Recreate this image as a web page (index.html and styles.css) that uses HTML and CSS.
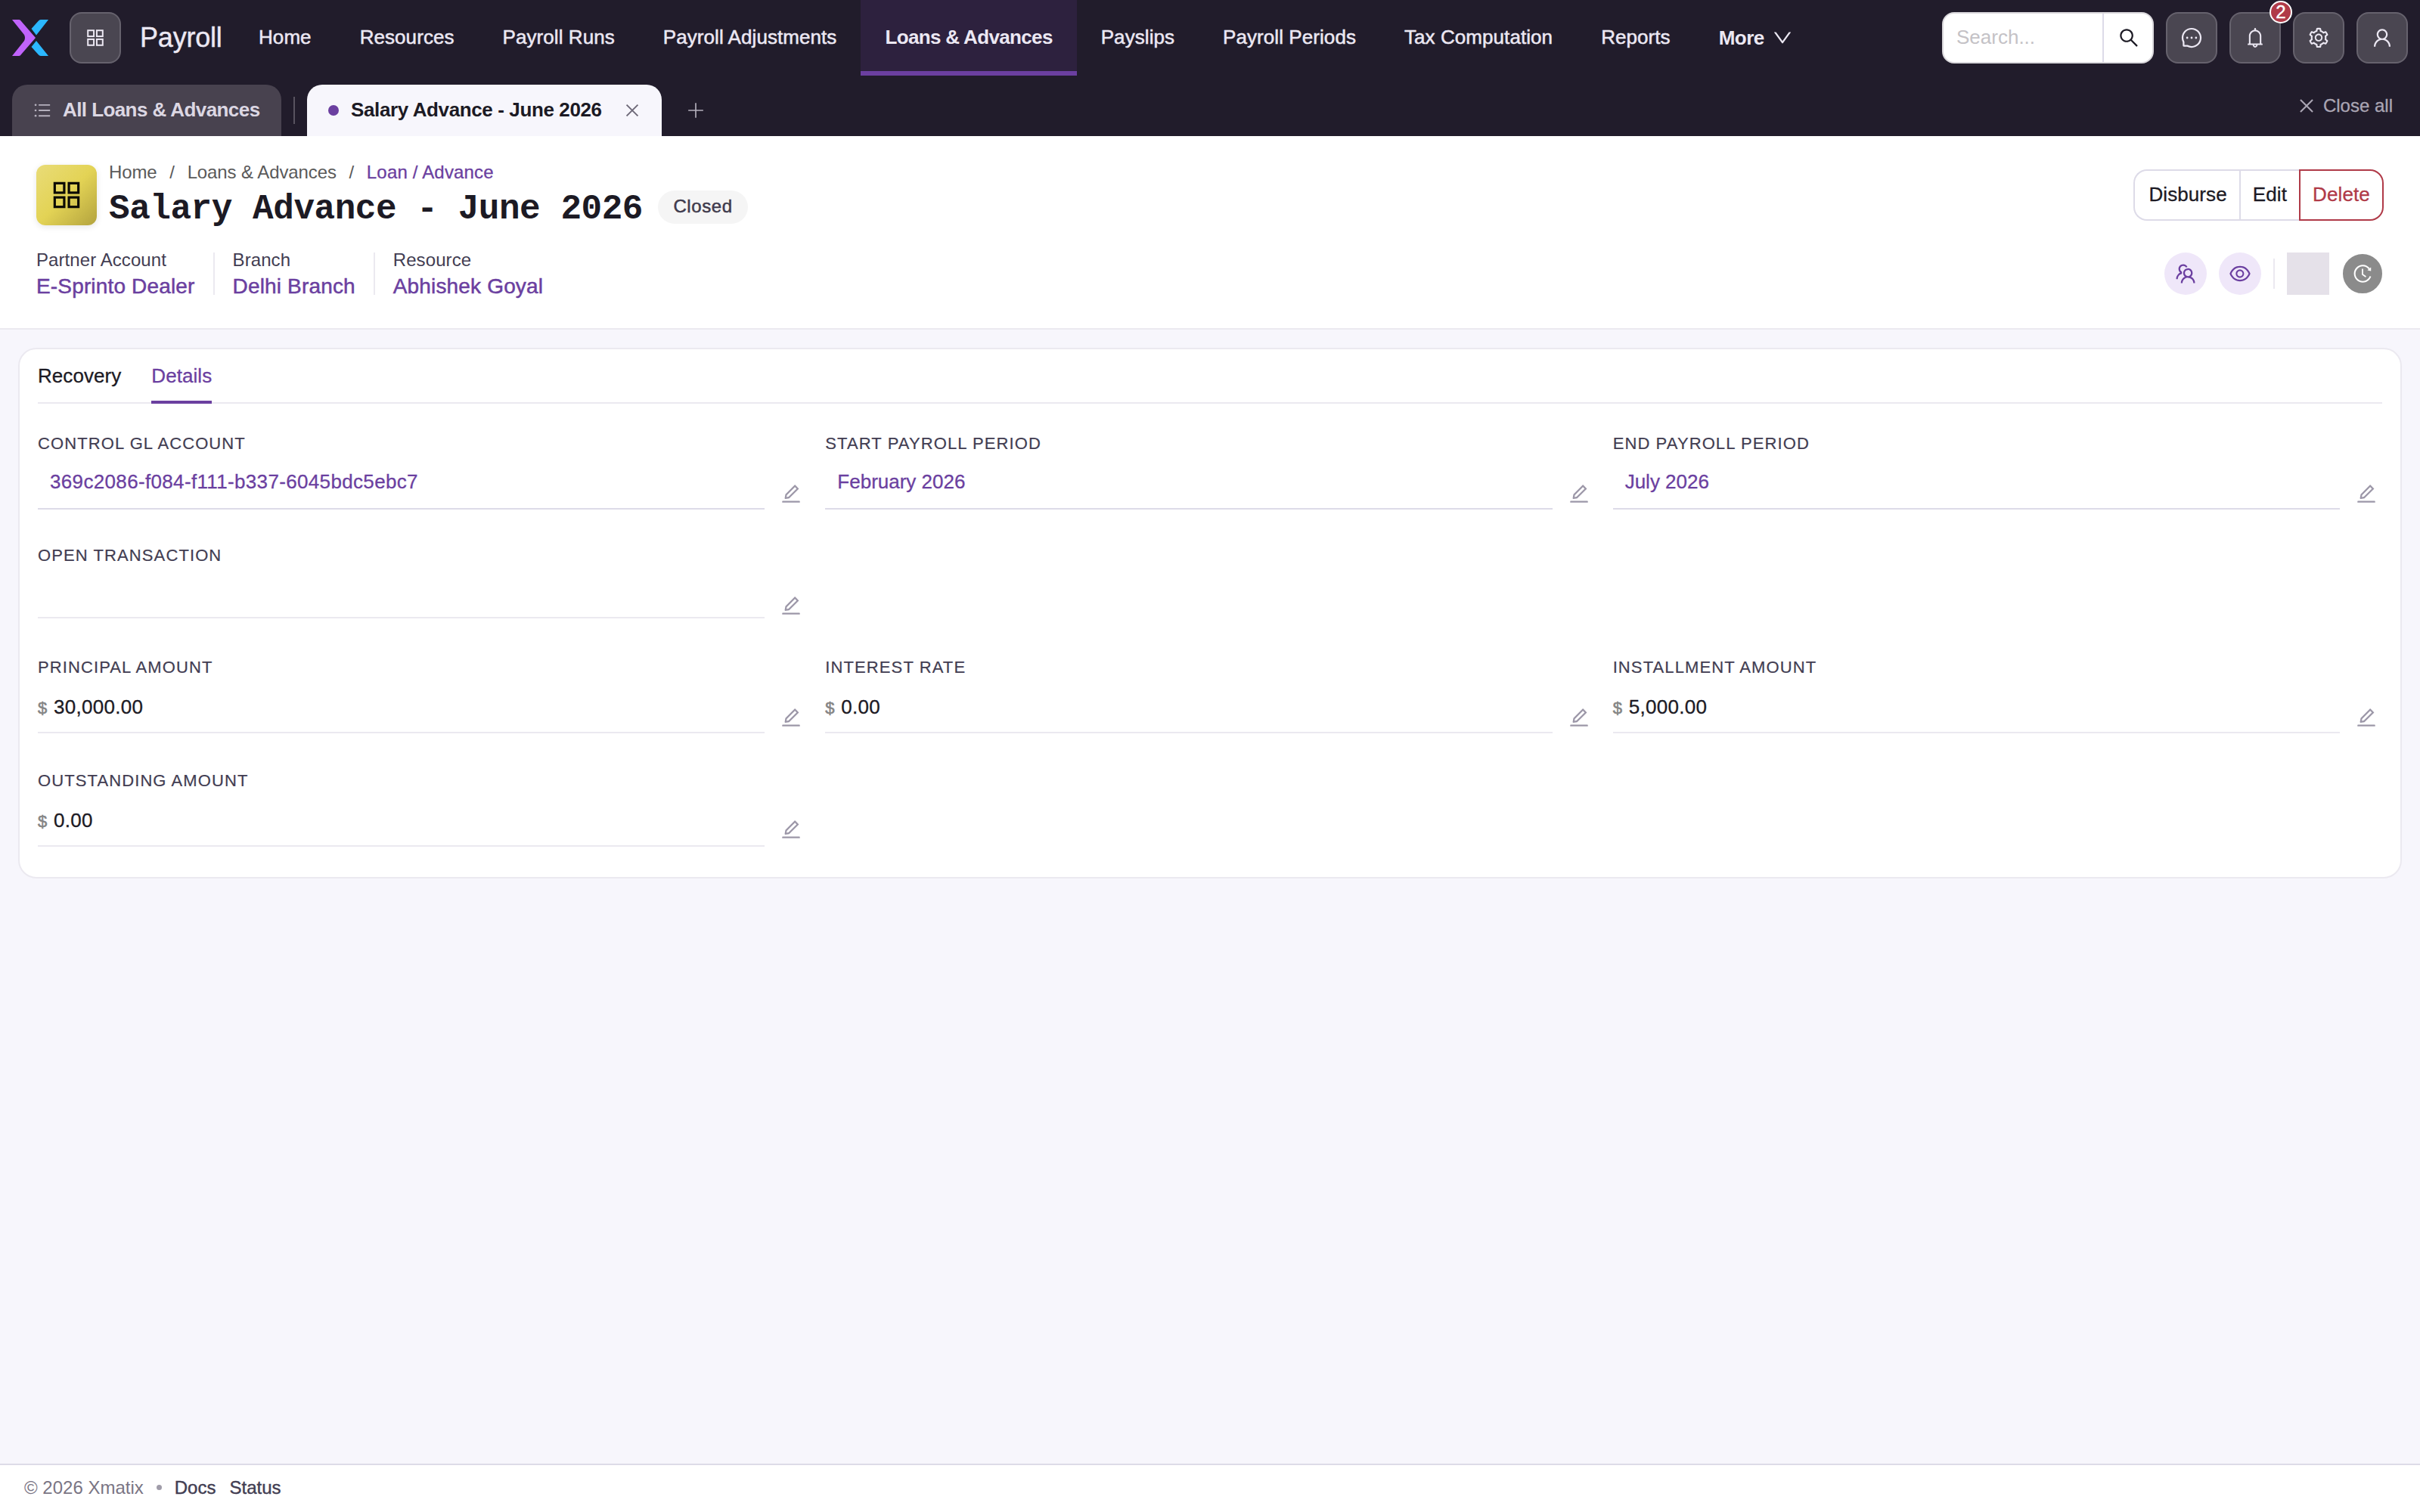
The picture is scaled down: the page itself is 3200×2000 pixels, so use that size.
FILE: index.html
```html
<!DOCTYPE html>
<html lang="en">
<head>
  <title>Salary Advance - June 2026</title>
  <meta charset="UTF-8">
  <meta name="viewport" content="width=device-width, initial-scale=1.0">
  <link rel="stylesheet" href="styles.css">
</head>
<body>
  <!-- Icon set -->
  <svg class="sprite" xmlns="http://www.w3.org/2000/svg">
    <symbol id="i-apps" viewBox="0 0 1024 1024">
      <g fill="none" stroke="currentColor" stroke-width="68">
        <rect x="178" y="178" width="268" height="268"/><rect x="578" y="178" width="268" height="268"/>
        <rect x="178" y="578" width="268" height="268"/><rect x="578" y="578" width="268" height="268"/>
      </g>
    </symbol>
    <symbol id="i-list" viewBox="0 0 1024 1024">
      <path d="M320 192h592v72H320zM320 476h592v72H320zM320 760h592v72H320z"/>
      <circle cx="160" cy="228" r="54"/><circle cx="160" cy="512" r="54"/><circle cx="160" cy="796" r="54"/>
    </symbol>
    <symbol id="i-close" viewBox="0 0 1024 1024">
      <path d="M195 195L829 829M829 195L195 829" fill="none" stroke="currentColor" stroke-width="82"/>
    </symbol>
    <symbol id="i-plus" viewBox="0 0 1024 1024">
      <path d="M482 152h60v720h-60zM152 482h720v60H152z"/>
    </symbol>
    <symbol id="i-down" viewBox="0 0 1024 1024">
      <path d="M884 256h-75c-5.1 0-9.9 2.5-12.9 6.6L512 654.2 227.9 262.6c-3-4.1-7.8-6.6-12.9-6.6h-75c-6.5 0-10.3 7.4-6.5 12.7l352.6 486.1c12.8 17.6 39 17.6 51.7 0l352.6-486.1c3.9-5.3.1-12.7-6.4-12.7z"/>
    </symbol>
    <symbol id="i-search" viewBox="0 0 1024 1024">
      <path d="M909.6 854.5L649.9 594.8C690.2 542.7 712 479 712 412c0-80.2-31.3-155.4-87.9-212.1-56.6-56.7-132-87.9-212.1-87.9s-155.5 31.3-212.1 87.9C143.2 256.5 112 331.8 112 412c0 80.1 31.3 155.5 87.9 212.1C256.5 680.8 331.8 712 412 712c67 0 130.6-21.8 182.7-62l259.7 259.6a8.2 8.2 0 0011.6 0l43.6-43.5a8.2 8.2 0 000-11.6zM570.4 570.4C528 612.7 471.8 636 412 636s-116-23.3-158.4-65.6C211.3 528 188 471.8 188 412s23.3-116.1 65.6-158.4C296 211.3 352.2 188 412 188s116.1 23.2 158.4 65.6S636 352.2 636 412s-23.3 116.1-65.6 158.4z"/>
    </symbol>
    <symbol id="i-message" viewBox="0 0 1024 1024">
      <path d="M464 512a48 48 0 1096 0 48 48 0 10-96 0zm200 0a48 48 0 1096 0 48 48 0 10-96 0zm-400 0a48 48 0 1096 0 48 48 0 10-96 0zm661.2-173.6c-22.6-53.7-55-101.9-96.3-143.3a444.35 444.35 0 00-143.3-96.3C630.6 75.7 572.2 64 512 64h-2c-60.6.3-119.3 12.3-174.5 35.9a445.35 445.35 0 00-142 96.5c-40.9 41.3-73 89.3-95.2 142.8-23 55.4-34.6 114.3-34.3 174.9A449.4 449.4 0 00112 714v152a46 46 0 0046 46h152.1A449.4 449.4 0 00510 960h2.1c59.9 0 118-11.6 172.7-34.3a444.48 444.48 0 00142.8-95.2c41.3-40.9 73.8-88.7 96.5-142 23.6-55.2 35.6-113.9 35.9-174.5.3-60.9-11.5-120-34.8-175.6zm-151.1 438C704 845.8 611 884 512 884h-1.7c-60.3-.3-120.2-15.3-173.1-43.5l-8.4-4.5H188V695.2l-4.5-8.4C155.3 633.9 140.3 574 140 513.7c-.4-99.7 37.7-193.3 107.6-263.8 69.8-70.5 163.1-109.5 262.8-109.9h1.7c50 0 98.5 9.7 144.2 28.9 44.6 18.7 84.6 45.6 119 80 34.3 34.3 61.3 74.4 80 119 19.4 46.2 29.1 95.2 28.9 145.8-.6 99.6-39.7 192.9-110.1 262.7z"/>
    </symbol>
    <symbol id="i-bell" viewBox="0 0 1024 1024">
      <path d="M816 768h-24V428c0-141.1-104.3-257.7-240-277.1V112c0-22.1-17.9-40-40-40s-40 17.9-40 40v38.9c-135.7 19.4-240 136-240 277.1v340h-24c-17.7 0-32 14.3-32 32v32c0 4.4 3.6 8 8 8h216c0 61.8 50.2 112 112 112s112-50.2 112-112h216c4.4 0 8-3.6 8-8v-32c0-17.7-14.3-32-32-32zM512 888c-26.5 0-48-21.5-48-48h96c0 26.5-21.5 48-48 48zM304 768V428c0-55.6 21.6-107.8 60.9-147.1S456.4 220 512 220c55.6 0 107.8 21.6 147.1 60.9S720 372.4 720 428v340H304z"/>
    </symbol>
    <symbol id="i-setting" viewBox="0 0 1024 1024">
      <path d="M924.8 625.7l-65.5-56c3.1-19 4.7-38.4 4.7-57.8s-1.6-38.8-4.7-57.8l65.5-56a32.03 32.03 0 009.3-35.2l-.9-2.6a443.74 443.74 0 00-79.7-137.9l-1.8-2.1a32.12 32.12 0 00-35.1-9.5l-81.3 28.9c-30-24.6-63.5-44-99.7-57.6l-15.7-85a32.05 32.05 0 00-25.8-25.7l-2.7-.5c-52.1-9.4-106.9-9.4-159 0l-2.7.5a32.05 32.05 0 00-25.8 25.7l-15.8 85.4a351.86 351.86 0 00-99 57.4l-81.9-29.1a32 32 0 00-35.1 9.5l-1.8 2.1a446.02 446.02 0 00-79.7 137.9l-.9 2.6c-4.5 12.5-.8 26.5 9.3 35.2l66.3 56.6c-3.1 18.8-4.6 38-4.6 57.1 0 19.2 1.5 38.4 4.6 57.1L99 625.5a32.03 32.03 0 00-9.3 35.2l.9 2.6c18.1 50.4 44.9 96.9 79.7 137.9l1.8 2.1a32.12 32.12 0 0035.1 9.5l81.9-29.1c29.8 24.5 63.1 43.9 99 57.4l15.8 85.4a32.05 32.05 0 0025.8 25.7l2.7.5a449.4 449.4 0 00159 0l2.7-.5a32.05 32.05 0 0025.8-25.7l15.7-85a350 350 0 0099.7-57.6l81.3 28.9a32 32 0 0035.1-9.5l1.8-2.1c34.8-41.1 61.6-87.5 79.7-137.9l.9-2.6c4.5-12.3.8-26.3-9.3-35zM788.3 465.9c2.5 15.1 3.8 30.6 3.8 46.1s-1.3 31-3.8 46.1l-6.6 40.1 74.7 63.9a370.03 370.03 0 01-42.6 73.6L721 702.8l-31.4 25.8c-23.9 19.6-50.5 35-79.3 45.8l-38.1 14.3-17.9 97a377.5 377.5 0 01-85 0l-17.9-97.2-37.8-14.5c-28.5-10.8-55-26.2-78.7-45.7l-31.4-25.9-93.4 33.2c-17-22.9-31.2-47.6-42.6-73.6l75.5-64.5-6.5-40c-2.4-14.9-3.7-30.3-3.7-45.5 0-15.3 1.2-30.6 3.7-45.5l6.5-40-75.5-64.5c11.3-26.1 25.6-50.7 42.6-73.6l93.4 33.2 31.4-25.9c23.7-19.5 50.2-34.9 78.7-45.7l37.9-14.3 17.9-97.2c28.1-3.2 56.8-3.2 85 0l17.9 97 38.1 14.3c28.7 10.8 55.4 26.2 79.3 45.8l31.4 25.8 92.8-32.9c17 22.9 31.2 47.6 42.6 73.6L781.8 426l6.5 39.9zM512 326c-97.2 0-176 78.8-176 176s78.8 176 176 176 176-78.8 176-176-78.8-176-176-176zm79.2 255.2A111.6 111.6 0 01512 614c-29.9 0-58-11.7-79.2-32.8A111.6 111.6 0 01400 502c0-29.9 11.7-58 32.8-79.2C454 401.6 482.1 390 512 390c29.9 0 58 11.6 79.2 32.8A111.6 111.6 0 01624 502c0 29.9-11.7 58-32.8 79.2z"/>
    </symbol>
    <symbol id="i-user" viewBox="0 0 1024 1024">
      <path d="M858.5 763.6a374 374 0 00-80.6-119.5 375.63 375.63 0 00-119.5-80.6c-.4-.2-.8-.3-1.2-.5C719.5 518 760 444.7 760 362c0-137-111-248-248-248S264 225 264 362c0 82.7 40.5 156 102.8 201.1-.4.2-.8.3-1.2.5-44.8 18.9-85 46-119.5 80.6a375.63 375.63 0 00-80.6 119.5A371.7 371.7 0 00136 901.8a8 8 0 008 8.2h60c4.4 0 7.9-3.5 8-7.8 2-77.2 33-149.5 87.8-204.3 56.7-56.7 132-87.9 212.2-87.9s155.5 31.2 212.2 87.9C779 752.7 810 825 812 902.2c.1 4.4 3.6 7.8 8 7.8h60a8 8 0 008-8.2c-1-47.8-10.9-94.3-29.5-138.2zM512 534c-45.9 0-89.1-17.9-121.6-50.4S340 407.9 340 362c0-45.9 17.9-89.1 50.4-121.6S466.1 190 512 190s89.1 17.9 121.6 50.4S684 316.1 684 362c0 45.9-17.9 89.1-50.4 121.6S557.9 534 512 534z"/>
    </symbol>
    <symbol id="i-team" viewBox="0 0 1024 1024">
      <path d="M824.2 699.9a301.55 301.55 0 00-86.4-60.4C783.1 602.8 812 546.8 812 484c0-110.8-92.4-201.7-203.2-200-109.1 1.7-197 90.6-197 200 0 62.8 29 118.8 74.2 155.5a300.95 300.95 0 00-86.4 60.4C345 754.6 314 826.8 312 903.8a8 8 0 008 8.2h56c4.3 0 7.9-3.4 8-7.7 1.9-58 25.4-112.3 66.7-153.5A226.62 226.62 0 01612 684c60.9 0 118.2 23.7 161.3 66.8C814.6 792 838 846.3 840 904.3c.1 4.3 3.7 7.7 8 7.7h56a8 8 0 008-8.2c-2-77-33-149.2-87.8-203.9zM612 612c-34.2 0-66.4-13.3-90.5-37.5a126.86 126.86 0 01-37.5-91.8c.3-32.8 13.4-64.5 36.3-88 24-24.6 56.1-38.3 90.4-38.7 33.9-.3 66.8 12.9 91 36.6 24.8 24.3 38.4 56.8 38.4 91.4 0 34.2-13.3 66.3-37.5 90.5A127.3 127.3 0 01612 612zM361.5 510.4c-.9-8.7-1.4-17.5-1.4-26.4 0-15.9 1.5-31.4 4.3-46.5.7-3.6-1.2-7.3-4.5-8.8-13.6-6.1-26.1-14.5-36.9-25.1a127.54 127.54 0 01-38.7-95.4c.9-32.1 13.8-62.6 36.3-85.6 24.7-25.3 57.9-39.1 93.2-38.7 31.9.3 62.7 12.6 86 34.4 7.9 7.4 14.7 15.6 20.4 24.4 2 3.1 5.9 4.4 9.3 3.2 17.6-6.1 36.2-10.4 55.3-12.4 5.6-.6 8.8-6.6 6.3-11.6-32.5-64.3-98.9-108.7-175.7-109.9-110.9-1.7-203.3 89.2-203.3 199.9 0 62.8 28.9 118.8 74.2 155.5-31.8 14.7-61.1 35-86.5 60.4-54.8 54.7-85.8 126.9-87.8 204a8 8 0 008 8.2h56.1c4.3 0 7.9-3.4 8-7.7 1.9-58 25.4-112.3 66.7-153.5 29.4-29.4 65.4-49.8 104.7-59.7 3.9-1 6.5-4.7 6-8.7z"/>
    </symbol>
    <symbol id="i-eye" viewBox="0 0 1024 1024">
      <path d="M942.2 486.2C847.4 286.5 704.1 186 512 186c-192.2 0-335.4 100.5-430.2 300.3a60.3 60.3 0 000 51.5C176.6 737.5 319.9 838 512 838c192.2 0 335.4-100.5 430.2-300.3 7.7-16.2 7.7-35 0-51.5zM512 766c-161.3 0-279.4-81.8-362.7-254C232.6 339.8 350.7 258 512 258c161.3 0 279.4 81.8 362.7 254C791.5 684.2 673.4 766 512 766zm-4-430c-97.2 0-176 78.8-176 176s78.8 176 176 176 176-78.8 176-176-78.8-176-176-176zm0 288c-61.9 0-112-50.1-112-112s50.1-112 112-112 112 50.1 112 112-50.1 112-112 112z"/>
    </symbol>
    <symbol id="i-history" viewBox="0 0 1024 1024">
      <path d="M536.1 273H488c-4.4 0-8 3.6-8 8v275.3c0 2.6 1.2 5 3.3 6.5l165.3 120.7c3.6 2.6 8.6 1.9 11.2-1.7l28.6-39c2.7-3.7 1.9-8.7-1.7-11.2L544.1 528.5V281c0-4.4-3.6-8-8-8zm219.8 75.2l156.8 38.3c5 1.2 9.9-2.6 9.9-7.7l.8-161.5c0-6.7-7.7-10.5-12.9-6.3L752.9 334.1a8 8 0 003 14.1zm167.7 301.1l-56.7-19.5a8 8 0 00-10.1 4.8c-1.9 5.1-3.9 10.1-6 15.1-17.8 42.1-43.3 80-75.9 112.5a353 353 0 01-112.5 75.9 352.18 352.18 0 01-137.7 27.8c-47.8 0-94.1-9.3-137.7-27.8a353 353 0 01-112.5-75.9c-32.5-32.5-58-70.4-75.9-112.5A353.44 353.44 0 01171 512c0-47.8 9.3-94.2 27.8-137.8 17.8-42.1 43.3-80 75.9-112.5a353 353 0 01112.5-75.9C430.6 167.3 477 158 524.8 158s94.1 9.3 137.7 27.8A353 353 0 01775 261.7c10.2 10.3 19.8 21 28.6 32.3l59.8-46.8C784.7 146.6 662.2 81.9 524.6 82 285 82.1 92.6 276.7 95 516.4 97.4 751.9 288.9 942 524.8 942c185.5 0 343.5-117.6 403.7-282.3 1.5-4.2-.7-8.9-4.9-10.4z"/>
    </symbol>
    <symbol id="i-edit" viewBox="0 0 1024 1024">
      <path d="M257.7 752c2 0 4-.2 6-.5L431.9 722c2-.4 3.9-1.3 5.3-2.8l423.9-423.9a9.96 9.96 0 000-14.1L694.9 114.9c-1.9-1.9-4.4-2.9-7.1-2.9s-5.2 1-7.1 2.9L256.8 538.8c-1.5 1.5-2.4 3.3-2.8 5.3l-29.5 168.2a33.5 33.5 0 009.4 29.8c6.6 6.4 14.9 9.9 23.8 9.9zm67.4-174.4L687.8 215l73.3 73.3-362.7 362.6-88.9 15.7 15.6-89zM880 836H144c-17.7 0-32 14.3-32 32v36c0 4.4 3.6 8 8 8h784c4.4 0 8-3.6 8-8v-36c0-17.7-14.3-32-32-32z"/>
    </symbol>
  </svg>

  <header class="topbar">
    <div class="navbar">
      <svg class="logo" viewBox="0 0 48 48">
        <path fill="#2bb7ff" d="M38 0H48L32 20.500L25.500 12L34.500 2Q36 0 38 0Z"/>
        <path fill="#2bb7ff" d="M38 48H48L32 28L25.500 36L34.500 46Q36 48 38 48Z"/>
        <path fill="#c063fb" d="M0 0H9Q11 0 12 2L31 24L12 46Q11 48 9 48H0L16 28Q18 24 16 20Z"/>
      </svg>
      <button class="icon-btn app-btn"><svg class="icon"><use href="#i-apps"/></svg></button>
      <div class="app-name">Payroll</div>
      <nav class="nav">
        <a class="nav-link">Home</a>
        <a class="nav-link">Resources</a>
        <a class="nav-link">Payroll Runs</a>
        <a class="nav-link">Payroll Adjustments</a>
        <a class="nav-link active">Loans &amp; Advances</a>
        <a class="nav-link">Payslips</a>
        <a class="nav-link">Payroll Periods</a>
        <a class="nav-link">Tax Computation</a>
        <a class="nav-link">Reports</a>
        <a class="nav-link more">More <svg class="icon"><use href="#i-down"/></svg></a>
      </nav>
      <div class="nav-tools">
        <div class="search">
          <span class="search-input">Search...</span>
          <button class="search-btn"><svg class="icon"><use href="#i-search"/></svg></button>
        </div>
        <button class="icon-btn"><svg class="icon"><use href="#i-message"/></svg></button>
        <button class="icon-btn"><svg class="icon"><use href="#i-bell"/></svg><span class="badge">2</span></button>
        <button class="icon-btn"><svg class="icon"><use href="#i-setting"/></svg></button>
        <button class="icon-btn"><svg class="icon"><use href="#i-user"/></svg></button>
      </div>
    </div>
    <div class="doc-tabs">
      <div class="doc-tab list-tab"><svg class="icon"><use href="#i-list"/></svg><span>All Loans &amp; Advances</span></div>
      <div class="doc-divider"></div>
      <div class="doc-tab open-tab"><i class="dot"></i><span>Salary Advance - June 2026</span><svg class="icon"><use href="#i-close"/></svg></div>
      <svg class="icon add-tab"><use href="#i-plus"/></svg>
      <div class="close-all"><svg class="icon"><use href="#i-close"/></svg>Close all</div>
    </div>
  </header>

  <section class="record-header">
    <div class="record-top">
      <div class="record-icon"><svg class="icon"><use href="#i-apps"/></svg></div>
      <div class="record-title">
        <div class="breadcrumb"><a>Home</a><i>/</i><a>Loans &amp; Advances</a><i>/</i><a class="current">Loan / Advance</a></div>
        <div class="title-row">
          <h1>Salary Advance - June 2026</h1>
          <span class="status">Closed</span>
        </div>
      </div>
      <div class="btn-group">
        <button class="btn">Disburse</button>
        <button class="btn">Edit</button>
        <button class="btn danger">Delete</button>
      </div>
    </div>
    <div class="record-meta">
      <div class="meta"><label>Partner Account</label><a>E-Sprinto Dealer</a></div>
      <div class="meta"><label>Branch</label><a>Delhi Branch</a></div>
      <div class="meta"><label>Resource</label><a>Abhishek Goyal</a></div>
      <div class="meta-tools">
        <span class="round"><svg class="icon"><use href="#i-team"/></svg></span>
        <span class="round"><svg class="icon"><use href="#i-eye"/></svg></span>
        <span class="tool-divider"></span>
        <span class="avatar"></span>
        <span class="round history"><svg class="icon"><use href="#i-history"/></svg></span>
      </div>
    </div>
  </section>

  <main class="card">
    <div class="tabs">
      <a class="tab">Recovery</a>
      <a class="tab active">Details</a>
    </div>
    <div class="fields">
      <div class="field">
        <label>Control GL Account</label>
        <div class="value link guid">369c2086-f084-f111-b337-6045bdc5ebc7</div>
        <svg class="icon edit"><use href="#i-edit"/></svg>
      </div>
      <div class="field">
        <label>Start Payroll Period</label>
        <div class="value link">February 2026</div>
        <svg class="icon edit"><use href="#i-edit"/></svg>
      </div>
      <div class="field">
        <label>End Payroll Period</label>
        <div class="value link">July 2026</div>
        <svg class="icon edit"><use href="#i-edit"/></svg>
      </div>
      <div class="field full">
        <label>Open Transaction</label>
        <div class="value empty"></div>
        <svg class="icon edit"><use href="#i-edit"/></svg>
      </div>
      <div class="field">
        <label>Principal Amount</label>
        <div class="value money"><span>$</span>30,000.00</div>
        <svg class="icon edit"><use href="#i-edit"/></svg>
      </div>
      <div class="field">
        <label>Interest Rate</label>
        <div class="value money"><span>$</span>0.00</div>
        <svg class="icon edit"><use href="#i-edit"/></svg>
      </div>
      <div class="field">
        <label>Installment Amount</label>
        <div class="value money"><span>$</span>5,000.00</div>
        <svg class="icon edit"><use href="#i-edit"/></svg>
      </div>
      <div class="field last">
        <label>Outstanding Amount</label>
        <div class="value money"><span>$</span>0.00</div>
        <svg class="icon edit"><use href="#i-edit"/></svg>
      </div>
    </div>
  </main>

  <footer class="footer">
    <span class="copy">© 2026 Xmatix</span>
    <i class="sep"></i>
    <a>Docs</a>
    <a>Status</a>
  </footer>
</body>
</html>
```
FILE: styles.css
```css
:root {
  --dark: #211c2b;
  --primary: #6b3fa0;
  --text: #1c1a24;
  --muted: #423d52;
  --border: #dddbe8;
  --border-light: #ebe9f0;
  --bg: #f7f6fc;
  --danger: #b03a48;
}

* {
  margin: 0;
  padding: 0;
  box-sizing: border-box;
}

body {
  display: flex;
  flex-direction: column;
  height: 2000px;
  overflow: hidden;
  background: var(--bg);
  color: var(--text);
  font-family: "Liberation Sans", Arial, sans-serif;
  font-size: 26px;
  white-space: nowrap;
}

button {
  font: inherit;
  color: inherit;
  background: none;
  border: none;
}

i {
  font-style: normal;
}

.sprite {
  display: none;
}

.icon {
  display: block;
  flex-shrink: 0;
  width: 30px;
  height: 30px;
  fill: currentColor;
}

/* Top bar */
.topbar {
  height: 180px;
  background: var(--dark);
  color: #ece8f3;
}

.navbar {
  display: flex;
  align-items: center;
  height: 100px;
  padding: 0 16px;
}

.logo {
  width: 48px;
  height: 48px;
  margin-right: 28px;
}

.icon-btn {
  position: relative;
  display: flex;
  align-items: center;
  justify-content: center;
  width: 68px;
  height: 68px;
  background: #4a4651;
  border: 2px solid #66626d;
  border-radius: 16px;
}

.app-name {
  width: 124px;
  padding-left: 25px;
  font-size: 36px;
  letter-spacing: -0.2px;
  -webkit-text-stroke: 0.4px;
}

.nav {
  display: flex;
  margin-left: 26px;
}

.nav-link {
  height: 100px;
  padding: 0 32px;
  line-height: 98px;
  letter-spacing: 0.07px;
  -webkit-text-stroke: 0.5px;
}

.nav-link.active {
  background: #2d213e;
  box-shadow: inset 0 -6px var(--primary);
  font-weight: 700;
  letter-spacing: -0.65px;
  -webkit-text-stroke: 0;
}

.nav-link.more {
  display: flex;
  align-items: center;
  gap: 9px;
  font-weight: 700;
  letter-spacing: -0.5px;
  -webkit-text-stroke: 0;
}

.nav-tools {
  display: flex;
  gap: 16px;
  margin-left: auto;
}

.search {
  display: flex;
  width: 280px;
  height: 68px;
  background: #fff;
  border: 2px solid #dad8dc;
  border-radius: 16px;
}

.search-input {
  width: 210px;
  padding-left: 17px;
  line-height: 62px;
  color: #c4c2c6;
}

.search-btn {
  display: flex;
  align-items: center;
  justify-content: center;
  flex: 1;
  padding-left: 2px;
  border-left: 2px solid var(--border);
  color: var(--text);
}

.badge {
  position: absolute;
  top: -17px;
  right: -17px;
  width: 30px;
  height: 30px;
  background: var(--danger);
  border: 2px solid #fff;
  border-radius: 15px;
  color: #fff;
  font-size: 24px;
  line-height: 26px;
  text-align: center;
  -webkit-text-stroke: 0.4px;
}

/* Open documents */
.doc-tabs {
  display: flex;
  align-items: flex-start;
  height: 80px;
  padding: 12px 36px 0 16px;
}

.doc-tab {
  display: flex;
  align-items: center;
  height: 68px;
  border-radius: 20px 20px 0 0;
  font-weight: 700;
  letter-spacing: -0.58px;
  line-height: 66px;
}

.doc-tab span {
  height: 68px;
}

.list-tab {
  width: 356px;
  padding-left: 27px;
  background: #48424f;
  color: #dcd7e3;
}

.list-tab .icon {
  width: 26px;
  height: 26px;
  margin-right: 14px;
  color: #b5b0bd;
}

.doc-divider {
  width: 2px;
  height: 36px;
  margin: 16px 16px 0;
  background: #58535f;
}

.open-tab {
  width: 469px;
  padding-left: 28px;
  background: var(--bg);
  color: var(--text);
  letter-spacing: -0.38px;
}

.open-tab span {
  width: 335px;
}

.open-tab .icon {
  width: 24px;
  height: 24px;
  margin-left: 25px;
  color: #6d6877;
}

.dot {
  width: 14px;
  height: 14px;
  margin-right: 16px;
  background: var(--primary);
  border-radius: 50%;
}

.add-tab {
  width: 28px;
  height: 28px;
  margin: 20px 0 0 31px;
  color: #b5b0bd;
}

.close-all {
  display: flex;
  align-items: center;
  gap: 9px;
  margin-left: auto;
  height: 56px;
  font-size: 24px;
  color: #aaa5b3;
  -webkit-text-stroke: 0.3px;
}

.close-all .icon {
  width: 26px;
  height: 26px;
}

/* Record header */
.record-header {
  height: 256px;
  padding: 32px 48px 0;
  background: #fff;
  border-bottom: 2px solid var(--border-light);
}

.record-top {
  display: flex;
  align-items: flex-start;
  height: 116px;
}

.record-icon {
  display: flex;
  align-items: center;
  justify-content: center;
  width: 80px;
  height: 80px;
  margin: 6px 16px 0 0;
  background: linear-gradient(135deg, #e9dc78 0%, #e3d355 50%, #b3a33e 100%);
  border-radius: 12px;
  box-shadow: 0 2px 8px rgba(0, 0, 0, 0.1);
  color: #0d0b05;
}

.record-icon .icon {
  width: 48px;
  height: 48px;
}

.breadcrumb {
  display: flex;
  height: 36px;
  font-size: 24px;
  line-height: 32px;
  letter-spacing: -0.1px;
  color: #5a5a5a;
}

.breadcrumb i {
  width: 40px;
  text-align: center;
}

.breadcrumb .current {
  color: var(--primary);
  letter-spacing: 0.18px;
  -webkit-text-stroke: 0.3px;
}

.title-row {
  display: flex;
  height: 60px;
}

h1 {
  font-family: "Liberation Mono", monospace;
  font-size: 46px;
  font-weight: 700;
  line-height: 58px;
  letter-spacing: -0.45px;
}

.status {
  width: 119px;
  height: 44px;
  margin: 4px 0 0 20px;
  background: #f5f5f5;
  border-radius: 22px;
  color: #3f3b4d;
  font-size: 24px;
  line-height: 42px;
  letter-spacing: 0.6px;
  text-align: center;
  -webkit-text-stroke: 0.5px;
}

.btn-group {
  display: flex;
  margin: 12px 0 0 auto;
}

.btn {
  height: 68px;
  padding: 0 16px 2px;
  border: 2px solid var(--border);
  border-right: none;
  letter-spacing: 0.1px;
  -webkit-text-stroke: 0.3px;
}

.btn:first-child {
  border-radius: 18px 0 0 18px;
  padding-left: 18px;
}

.btn.danger {
  width: 112px;
  border: 2px solid var(--danger);
  border-radius: 0 18px 18px 0;
  color: var(--danger);
}

.record-meta {
  display: flex;
  height: 68px;
}

.meta {
  margin-right: 24px;
  padding-right: 26px;
  background: linear-gradient(var(--border-light), var(--border-light)) right center / 2px 56px no-repeat;
}

.meta:nth-child(3) {
  background: none;
}

.meta label {
  display: block;
  font-size: 24px;
  line-height: 32px;
  letter-spacing: 0.08px;
  color: var(--muted);
}

.meta a {
  display: block;
  font-size: 28px;
  line-height: 37px;
  letter-spacing: 0.16px;
  color: var(--primary);
  -webkit-text-stroke: 0.5px;
}

.meta-tools {
  display: flex;
  align-items: center;
  gap: 16px;
  margin-left: auto;
}

.round {
  display: flex;
  align-items: center;
  justify-content: center;
  width: 56px;
  height: 56px;
  background: #efe7f9;
  border-radius: 50%;
  color: var(--primary);
}

.round .icon {
  width: 32px;
  height: 32px;
}

.history {
  background: #8b8b8b;
  border: 2px solid #fff;
  color: #fff;
}

.history .icon {
  width: 28px;
  height: 28px;
}

.tool-divider {
  width: 2px;
  height: 40px;
  background: var(--border-light);
}

.avatar {
  width: 56px;
  height: 56px;
  background: #e5e1e9;
}

/* Details card */
.card {
  height: 702px;
  margin: 24px 24px 0;
  padding: 0 24px;
  background: #fff;
  border: 2px solid var(--border-light);
  border-radius: 24px;
}

.tabs {
  display: flex;
  gap: 40px;
  height: 72px;
  border-bottom: 2px solid var(--border-light);
}

.tab {
  height: 72px;
  line-height: 70px;
  letter-spacing: 0.06px;
  -webkit-text-stroke: 0.3px;
}

.tab.active {
  border-bottom: 4px solid var(--primary);
  color: var(--primary);
}

.fields {
  display: grid;
  grid-template-columns: repeat(3, 1fr);
  grid-template-rows: 148px 148px 150px 142px;
  column-gap: 24px;
  padding-top: 36px;
}

.field {
  display: grid;
  grid-template-columns: 1fr 56px;
  grid-template-rows: 32px 1fr;
}

.field.full {
  grid-column: 1 / -1;
  width: 1017px;
}

.field label {
  grid-column: 1 / -1;
  font-size: 22px;
  line-height: 34px;
  letter-spacing: 1.1px;
  text-transform: uppercase;
  color: var(--muted);
  -webkit-text-stroke: 0.2px;
}

.value {
  height: 72px;
  border-bottom: 2px solid var(--border-light);
  line-height: 70px;
}

.value.link {
  padding-left: 16px;
  border-color: var(--border);
  color: var(--primary);
  -webkit-text-stroke: 0.3px;
}

.value.guid {
  letter-spacing: 0.34px;
}

.value.empty {
  height: 68px;
}

.value.money {
  line-height: 74px;
  letter-spacing: 0.3px;
  -webkit-text-stroke: 0.3px;
}

.value.money span {
  display: inline-block;
  width: 21px;
  font-size: 22px;
  color: #858585;
  -webkit-text-stroke: 0.6px;
}

.edit {
  margin: 36px 0 0 20px;
  color: #9c97a8;
}

.last .edit {
  margin-top: 34px;
}

/* Footer */
.footer {
  display: flex;
  align-items: center;
  height: 64px;
  margin-top: auto;
  padding: 0 32px 3px;
  background: #fff;
  border-top: 2px solid var(--border);
  font-size: 24px;
  color: var(--muted);
}

.footer a {
  margin-right: 18px;
  -webkit-text-stroke: 0.4px;
}

.copy {
  color: #7a7584;
}

.sep {
  width: 7px;
  height: 7px;
  margin: 0 17px;
  background: #a09ca9;
  border-radius: 50%;
}
```
